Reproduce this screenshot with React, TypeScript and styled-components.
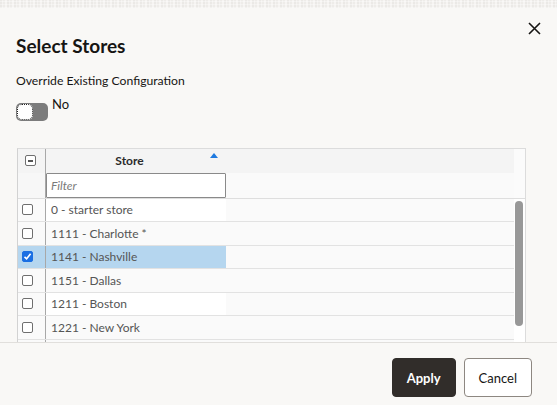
import styled, { createGlobalStyle } from "styled-components";

const stores = [
  { id: "0", name: "0 - starter store", checked: false },
  { id: "1111", name: "1111 - Charlotte *", checked: false },
  { id: "1141", name: "1141 - Nashville", checked: true },
  { id: "1151", name: "1151 - Dallas", checked: false },
  { id: "1211", name: "1211 - Boston", checked: false },
  { id: "1221", name: "1221 - New York", checked: false },
];

const GlobalStyle = createGlobalStyle`
  html, body {
    margin: 0;
    padding: 0;
    background: #f9f8f6;
  }
  body {
    font-family: Lato, "Liberation Sans", sans-serif;
    color: #161513;
  }
  * { box-sizing: border-box; }
`;

const Page = styled.div`
  height: 405px;
  display: flex;
  flex-direction: column;
  overflow: hidden;
`;

const TopStrip = styled.div`
  height: 8px;
  flex: none;
  background:
    repeating-linear-gradient(
      0deg,
      rgba(255, 255, 255, 0.35) 0 1px,
      transparent 1px 3px
    ),
    repeating-linear-gradient(
      90deg,
      #ebe9e6 0 2px,
      #f4f2f0 2px 3px,
      #eeece9 3px 5px,
      #f6f4f2 5px 7px
    );
`;

const Body = styled.div`
  flex: 1;
  min-height: 0;
  display: flex;
  flex-direction: column;
  padding: 14px 16px 0 16px;
  overflow: hidden;
`;

const Header = styled.div`
  display: flex;
  justify-content: space-between;
  align-items: flex-start;
  flex: none;
`;

const Title = styled.h1`
  margin: 11.5px 0 0;
  font-size: 19px;
  line-height: 24px;
  font-weight: 700;
`;

const CloseButton = styled.button`
  width: 13px;
  height: 13px;
  padding: 0;
  border: 0;
  background: none;
  display: flex;
  color: #161513;
`;

const Label = styled.div`
  margin-top: 15.5px;
  font-size: 12.2px;
  line-height: 16px;
  color: #161513;
`;

const ToggleRow = styled.div`
  margin-top: 7.3px;
  display: flex;
  align-items: flex-start;
  flex: none;
`;

const Track = styled.div`
  margin-top: 7px;
  width: 32px;
  height: 18px;
  border-radius: 5px;
  background: #7c7c7c;
  padding: 1px;
`;

const Knob = styled.div`
  width: 16px;
  height: 16px;
  border-radius: 5px;
  background: #fff;
  outline: 1px dotted #222;
  outline-offset: -1px;
`;

const ToggleText = styled.span`
  margin-left: 4px;
  font-size: 13px;
  line-height: 16px;
  color: #161513;
`;

const Frame = styled.div`
  margin: 26.7px 0 0 1px;
  width: 509px;
  flex: 1;
  min-height: 0;
  display: flex;
  flex-direction: column;
  border: 1px solid #dcdcdc;
  border-bottom: 0;
  border-left-color: #d2d2d2;
  background: #fafafa;
  overflow: hidden;
`;

const Row = styled.div<{ $bg?: string; $h: number; $line?: boolean }>`
  display: flex;
  flex: none;
  height: ${(p) => p.$h}px;
  background: ${(p) => p.$bg || "#fafafa"};
  border-bottom: ${(p) => (p.$line ? "1px solid #dedede" : "0")};
`;

const Gutter = styled.div<{ $bg?: string; $pad?: number }>`
  width: 28px;
  flex: none;
  display: flex;
  align-items: center;
  padding-left: ${(p) => p.$pad ?? 4}px;
  border-right: 1px solid #a8a8a8;
  background: ${(p) => p.$bg || "transparent"};
`;

const HeadCell = styled.div`
  width: 180px;
  position: relative;
  display: flex;
  align-items: center;
  justify-content: center;
  padding-right: 13px;
  font-size: 12px;
  font-weight: 700;
  color: #2b2b2b;
`;

const SortArrow = styled.span`
  position: absolute;
  right: 8px;
  top: 4px;
  width: 0;
  height: 0;
  border-left: 4px solid transparent;
  border-right: 4px solid transparent;
  border-bottom: 5px solid #1f7ae0;
`;

const FilterInput = styled.input`
  width: 180px;
  height: 25px;
  margin: 0;
  border: 1px solid #8a8a8a;
  border-radius: 1px;
  background: #fff;
  padding: 0 4px;
  font-family: Lato, "Liberation Sans", sans-serif;
  font-size: 12px;
  color: #333;
  outline: none;
  &::placeholder {
    font-style: italic;
    color: #7a7a7a;
  }
`;

const Filler = styled.div`
  flex: 1;
`;

const ScrollCorner = styled.div`
  width: 11px;
  flex: none;
  background: #fbfbfb;
`;

const BodyArea = styled.div`
  flex: 1;
  min-height: 0;
  display: flex;
`;

const RowList = styled.div`
  flex: 1;
  display: flex;
  flex-direction: column;
  > :last-child {
    flex: 1;
  }
`;

const DataRow = styled.div<{ $selected: boolean }>`
  display: flex;
  flex: none;
  height: 23px;
  border-bottom: 1px solid #e2e2e2;
  &:nth-child(even) {
    height: 24px;
  }
  > div:first-child {
    background: ${(p) => (p.$selected ? "#b5d6ef" : "#fafafa")};
  }
`;

const EmptyRow = styled.div`
  display: flex;
`;

const DataCell = styled.div<{ $selected: boolean; $odd: boolean }>`
  width: 180px;
  flex: none;
  display: flex;
  align-items: center;
  padding-left: 5px;
  font-size: 12px;
  color: #555;
  background: ${(p) => (p.$selected ? "#b5d6ef" : p.$odd ? "#fff" : "#fafafa")};
`;

const ScrollTrack = styled.div`
  width: 11px;
  flex: none;
  background: #fff;
  padding: 2px 2px 0 1px;
`;

const Thumb = styled.div`
  width: 8px;
  height: 125px;
  border-radius: 4px;
  background: #989898;
`;

const Box = styled.span<{ $checked?: boolean }>`
  width: 11px;
  height: 11px;
  border-radius: 2px;
  border: 1px solid ${(p) => (p.$checked ? "#1a6fe3" : "#6f6f6f")};
  background: ${(p) => (p.$checked ? "#1a6fe3" : "#fff")};
  display: flex;
  align-items: center;
  justify-content: center;
`;

const MinusBar = styled.span`
  width: 5px;
  height: 1.5px;
  background: #555;
`;

const Footer = styled.div`
  height: 63px;
  flex: none;
  border-top: 1px solid #e1dfdc;
  display: flex;
  justify-content: flex-end;
  align-items: flex-start;
  gap: 8px;
  padding: 15px 25px 0 0;
`;

const Button = styled.button<{ $primary?: boolean }>`
  height: 39px;
  min-width: ${(p) => (p.$primary ? 64 : 68)}px;
  padding: 0 14px;
  border-radius: 4px;
  border: 1px solid ${(p) => (p.$primary ? "#312d2a" : "#8d8781")};
  background: ${(p) => (p.$primary ? "#312d2a" : "#fff")};
  color: ${(p) => (p.$primary ? "#fff" : "#161513")};
  font-family: Lato, "Liberation Sans", sans-serif;
  font-size: 13px;
  font-weight: ${(p) => (p.$primary ? 700 : 400)};
`;

function CheckMark() {
  return (
    <svg width="9" height="9" viewBox="0 0 9 9">
      <path d="M1.5 4.8 L3.6 6.8 L7.6 1.8" fill="none" stroke="#fff" strokeWidth="1.6" />
    </svg>
  );
}

export default function App() {
  return (
    <Page>
      <GlobalStyle />
      <TopStrip />
      <Body>
        <Header>
          <Title>Select Stores</Title>
          <CloseButton aria-label="Close">
            <svg width="13" height="13" viewBox="0 0 13 13">
              <path d="M1 1 L12 12 M12 1 L1 12" stroke="#161513" strokeWidth="1.6" />
            </svg>
          </CloseButton>
        </Header>
        <Label>Override Existing Configuration</Label>
        <ToggleRow>
          <Track>
            <Knob />
          </Track>
          <ToggleText>No</ToggleText>
        </ToggleRow>

        <Frame>
          <Row $h={24} $bg="#f4f4f4">
            <Gutter $pad={7}>
              <Box>
                <MinusBar />
              </Box>
            </Gutter>
            <HeadCell>
              Store
              <SortArrow />
            </HeadCell>
            <Filler />
            <ScrollCorner />
          </Row>
          <Row $h={26} $bg="#fafafa" $line>
            <Gutter $bg="#f7f7f7" />
            <FilterInput placeholder="Filter" />
            <Filler />
            <ScrollCorner />
          </Row>
          <BodyArea>
            <RowList>
              {stores.map((s, i) => (
                <DataRow key={s.id} $selected={s.checked}>
                  <Gutter>
                    <Box $checked={s.checked}>{s.checked && <CheckMark />}</Box>
                  </Gutter>
                  <DataCell $selected={s.checked} $odd={i % 2 === 0}>
                    {s.name}
                  </DataCell>
                  <Filler />
                </DataRow>
              ))}
              <EmptyRow>
                <Gutter />
              </EmptyRow>
            </RowList>
            <ScrollTrack>
              <Thumb />
            </ScrollTrack>
          </BodyArea>
        </Frame>
      </Body>
      <Footer>
        <Button $primary>Apply</Button>
        <Button>Cancel</Button>
      </Footer>
    </Page>
  );
}
